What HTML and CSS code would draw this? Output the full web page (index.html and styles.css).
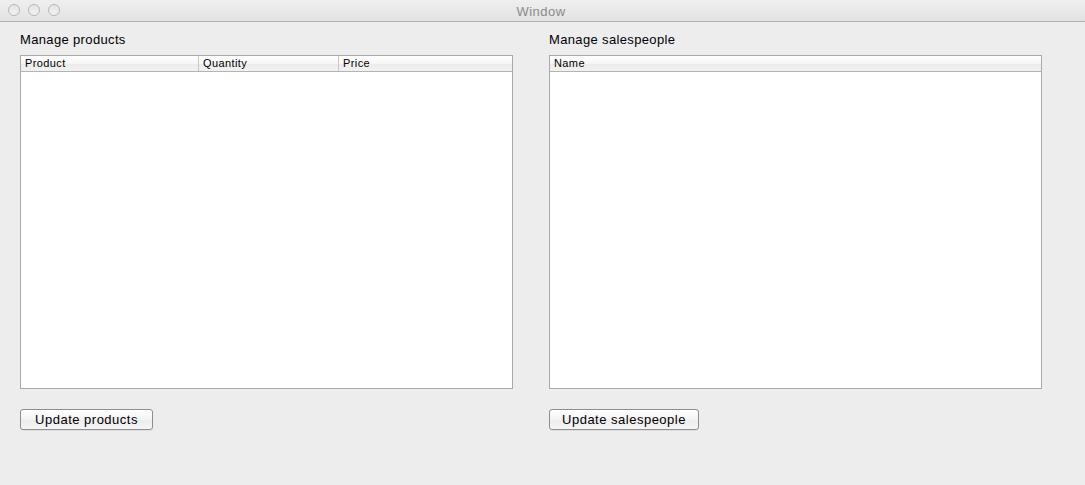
FILE: index.html
```html
<!DOCTYPE html>
<html>
<head>
<meta charset="utf-8">
<link rel="stylesheet" href="styles.css">
</head>
<body>
<div class="window">
  <div class="titlebar">
    <div class="lights">
      <span class="light"></span><span class="light"></span><span class="light"></span>
    </div>
    <div class="title">Window</div>
  </div>
  <div class="content">
    <div class="panel">
      <div class="label">Manage products</div>
      <div class="table">
        <div class="thead">
          <div class="th c1">Product</div>
          <div class="th c2">Quantity</div>
          <div class="th c3">Price</div>
        </div>
        <div class="tbody"></div>
      </div>
      <button class="btn btn-products">Update products</button>
    </div>
    <div class="panel">
      <div class="label">Manage salespeople</div>
      <div class="table">
        <div class="thead">
          <div class="th c-full">Name</div>
        </div>
        <div class="tbody"></div>
      </div>
      <button class="btn btn-sales">Update salespeople</button>
    </div>
  </div>
</div>
</body>
</html>
```

FILE: styles.css
```css
html, body {
  margin: 0;
  padding: 0;
  background: #ededed;
  font-family: "Liberation Sans", sans-serif;
}
.window {
  width: 1085px;
  height: 485px;
  background: #ededed;
  overflow: hidden;
}
.titlebar {
  position: relative;
  height: 21px;
  border-bottom: 1px solid #b1b1b1;
  background: linear-gradient(#efefef, #e2e2e2);
  display: flex;
  align-items: center;
  justify-content: center;
}
.lights {
  position: absolute;
  left: 8px;
  top: 4px;
  display: flex;
  gap: 8px;
}
.light {
  width: 10px;
  height: 10px;
  border-radius: 50%;
  border: 1px solid #b6b6b6;
  background: linear-gradient(#e4e4e4, #f2f2f2);
  box-sizing: content-box;
}
.title {
  font-family: "Liberation Sans", sans-serif;
  font-size: 13px;
  letter-spacing: 0.5px;
  color: #8a8a8a;
  margin-top: 1px;
  margin-left: -3px;
}
.content {
  display: flex;
  gap: 36px;
  padding: 10px 0 0 20px;
}
.panel {
  width: 493px;
  display: flex;
  flex-direction: column;
  align-items: flex-start;
}
.label {
  font-family: "Liberation Sans", sans-serif;
  font-size: 13px;
  letter-spacing: 0.35px;
  color: #000;
  height: 23px;
  line-height: 16px;
}
.table {
  width: 493px;
  height: 334px;
  box-sizing: border-box;
  border: 1px solid #a9a9a9;
  background: #fff;
  display: flex;
  flex-direction: column;
}
.thead {
  display: flex;
  height: 15px;
  border-bottom: 1px solid #b4b4b4;
  background: linear-gradient(#ffffff, #f6f6f6 50%, #ececec 51%, #f1f1f1);
}
.th {
  font-family: "Liberation Sans", sans-serif;
  font-size: 11px;
  letter-spacing: 0.4px;
  line-height: 15px;
  color: #000;
  padding-left: 4px;
  box-sizing: border-box;
}
.c1 { width: 178px; border-right: 1px solid #c8c8c8; }
.c2 { width: 140px; border-right: 1px solid #c8c8c8; }
.c3 { flex: 1; }
.c-full { flex: 1; }
.tbody { flex: 1; }
.btn {
  margin-top: 20px;
  height: 21px;
  padding: 0;
  font-family: "Liberation Sans", sans-serif;
  font-size: 13px;
  letter-spacing: 0.5px;
  color: #000;
  border: 1px solid #8e8e8e;
  border-radius: 3px;
  background: linear-gradient(#ffffff, #f3f3f3 50%, #ececec 51%, #f6f6f6);
  box-shadow: 0 1px 0 rgba(0,0,0,0.05);
}
.btn-products { width: 133px; }
.btn-sales { width: 150px; }
```
